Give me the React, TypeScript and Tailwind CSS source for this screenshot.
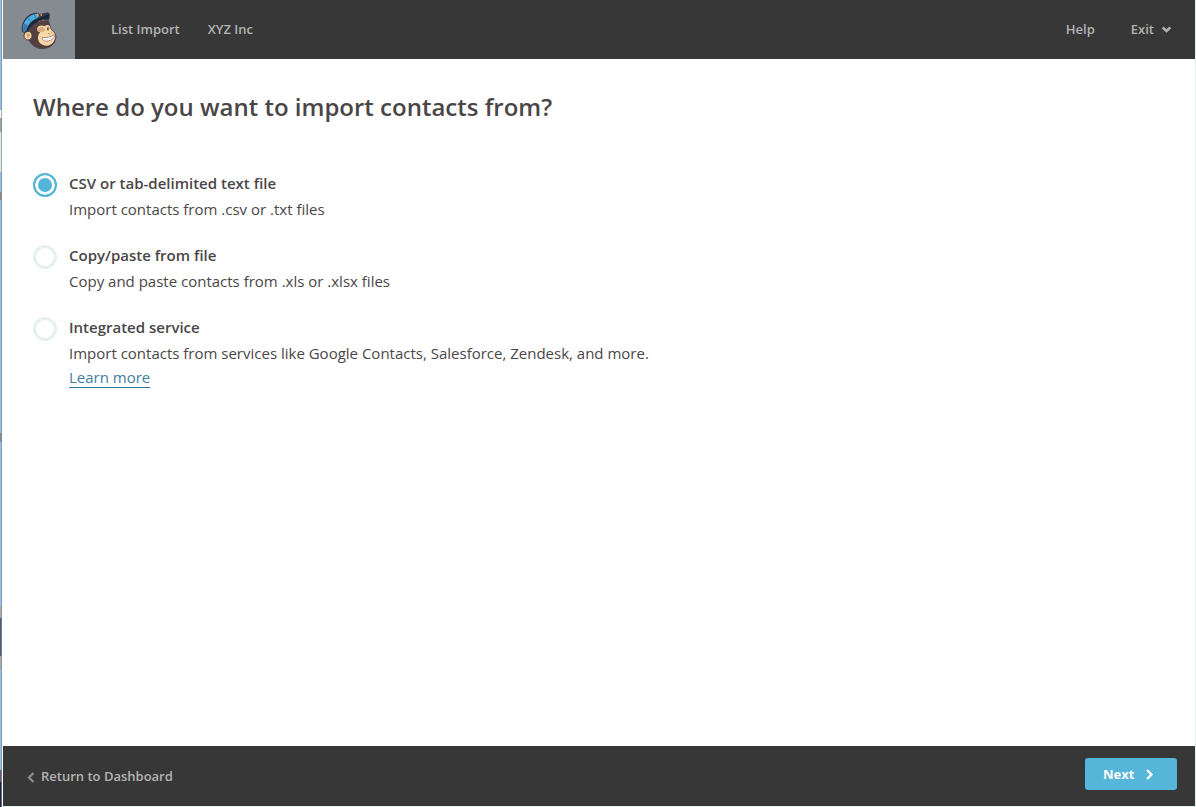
import React, { useState } from 'react';

type ImportSource = {
  id: string;
  title: string;
  description: string;
  link?: string;
};

const sources: ImportSource[] = [
  { id: 'csv', title: 'CSV or tab-delimited text file', description: 'Import contacts from .csv or .txt files' },
  { id: 'paste', title: 'Copy/paste from file', description: 'Copy and paste contacts from .xls or .xlsx files' },
  {
    id: 'service',
    title: 'Integrated service',
    description: 'Import contacts from services like Google Contacts, Salesforce, Zendesk, and more.',
    link: 'Learn more',
  },
];

const MonkeyLogo = () => (
  <svg className="h-[39px] w-[37px]" viewBox="60 34 111 117" aria-hidden="true">
    {/* head */}
    <path d="M84 92L104 70L145 62L152 84C154 92 166 98 168 110C168 132 150 147 128 147C106 147 92 134 86 119Z" fill="#53403f" stroke="#443b4d" strokeWidth="2" />
    {/* face */}
    <path d="M111 88C114 76 126 76 134 80C141 73 150 75 151 84C151 91 163 95 166 107C167 126 153 139 139 138C123 137 112 125 114 111C115 104 119 101 120 97C114 97 111 93 111 88Z" fill="#f7d7a3" />
    <path d="M114 88C118 80 128 81 133 84L136 92C130 98 118 98 114 94Z" fill="#d8aa7b" />
    <path d="M143 80C149 79 150 85 148 90L142 88Z" fill="#d8aa7b" />
    <path d="M143 84L144 92" stroke="#53403f" strokeWidth="4" />
    <path d="M144 101L149 103M154 99L157 101" stroke="#9c6b55" strokeWidth="2" />
    {/* ear */}
    <ellipse cx="84" cy="108" rx="12" ry="13" fill="#f7d7a3" stroke="#53403f" strokeWidth="3" />
    <path d="M79 106C83 101 89 103 89 109M85 106L83 114" fill="none" stroke="#b98262" strokeWidth="3" />
    {/* smile */}
    <path d="M126 113C137 116 152 112 164 105C165 116 151 127 133 124C129 122 127 118 126 113Z" fill="#fff" stroke="#8b6257" strokeWidth="2" />
    <path d="M130 119C143 120 155 117 162 111M140 115L141 123M151 112L153 119" fill="none" stroke="#b7b6b7" strokeWidth="1" />
    {/* cap */}
    <path d="M66 97C62 75 72 55 91 44C103 37 112 38 119 43L145 38L150 45L148 60C127 61 108 67 95 82L82 97L74 100Z" fill="#393955" />
    <path d="M69 94C66 76 75 58 92 48C101 43 110 41 117 45L112 56C94 62 84 75 79 91L72 97Z" fill="#4aaede" />
    <path d="M69 94C68 86 70 77 75 71L84 78C80 85 79 90 78 94Z" fill="#367eac" />
    <path d="M85 57L94 67M103 44L107 56" stroke="#327aa8" strokeWidth="3" />
    <path d="M80 94C85 75 98 61 119 55L147 43L146 57C122 57 105 66 93 80L83 93Z" fill="#172733" />
    <path d="M111 42L116 51M123 43L124 49" stroke="#eb9c58" strokeWidth="4" />
    <path d="M116 65L121 63M126 62L131 61" stroke="#d59451" strokeWidth="2" />
  </svg>
);

const App = () => {
  const [selected, setSelected] = useState('csv');

  return (
    <div className="flex min-h-screen bg-white font-['Open_Sans','Noto_Sans',sans-serif] text-[#4a4647]">
      <div className="mr-px w-[2px] shrink-0 border-r border-[#7d8b98]/70 bg-[linear-gradient(#8fc3ed_110px,#ffffff_110px_118px,#9aa4a9_118px_132px,#dceae8_132px_172px,#8fc3ed_172px_192px,#858b8f_192px_200px,#8fc3ed_200px_433px,#858b8f_433px_442px,#8fc3ed_442px_606px,#a8aaaa_606px_618px,#54597c_618px_656px,#a8aaaa_656px_670px,#8fc3ed_670px_770px,#665e70_770px_782px,#1c2838_782px)]" />
      <div className="flex min-w-0 flex-1 flex-col border-r border-b border-[#e4f0ee]">
        <header className="flex h-[59px] items-center bg-[#373737] text-[13px] font-semibold text-[#b3b3b3]">
          <a href="#" aria-label="Home" className="flex h-full w-[72px] items-center justify-center bg-[#848b91] pt-0.5 pr-0.5">
            <MonkeyLogo />
          </a>
          <nav className="flex flex-1 gap-7 pl-9">
            <a href="#">List Import</a>
            <a href="#">XYZ Inc</a>
          </nav>
          <nav className="flex items-center gap-9 pr-6">
            <a href="#">Help</a>
            <button type="button" className="flex items-center gap-2">
              Exit
              <svg className="h-[9px] w-[9px]" viewBox="0 0 9 9" aria-hidden="true">
                <path d="M0.700 2.500L4.500 6L8.300 2.500" fill="none" stroke="currentColor" strokeWidth="2.500" />
              </svg>
            </button>
          </nav>
        </header>

        <main className="flex-1 px-[30px] pt-8">
          <h1 className="text-2xl font-semibold">Where do you want to import contacts from?</h1>
          <form className="mt-12 flex flex-col gap-[22px]">
            {sources.map((source) => (
              <div key={source.id} className="flex gap-3">
                <input
                  type="radio"
                  id={source.id}
                  name="source"
                  checked={selected === source.id}
                  onChange={() => setSelected(source.id)}
                  className="mt-0.5 h-6 w-6 shrink-0 appearance-none rounded-full border-[3px] border-[#e6f0ee] bg-white checked:border-2 checked:border-[#52b5d9] checked:bg-[#52b5d9] checked:shadow-[inset_0_0_0_3px_white]"
                />
                <div className="text-[15px] leading-6">
                  <label htmlFor={source.id} className="mb-0.5 block font-semibold">{source.title}</label>
                  <p>{source.description}</p>
                  {source.link && (
                    <a href="#" className="inline-block border-b border-[#2c7bab] leading-5 text-[#4180a5]">{source.link}</a>
                  )}
                </div>
              </div>
            ))}
          </form>
        </main>

        <footer className="flex h-[60px] items-center justify-between bg-[#373737] pr-[18px] pl-6 text-[13px]">
          <a href="#" className="flex items-center gap-1.5 pt-0.5 font-semibold text-[#b3b3b3]">
            <svg className="h-[11px] w-2" viewBox="0 0 8 11" aria-hidden="true">
              <path d="M6.500 1L2 5.500L6.500 10" fill="none" stroke="#8c8c8c" strokeWidth="2.300" />
            </svg>
            Return to Dashboard
          </a>
          <button type="button" className="mb-1 flex h-8 w-[92px] items-center gap-3 rounded-[3px] bg-[#56b6d9] pt-px pl-[18px] font-bold text-white">
            Next
            <svg className="h-[11px] w-2" viewBox="0 0 8 11" aria-hidden="true">
              <path d="M1 1L5.500 5.500L1 10" fill="none" stroke="currentColor" strokeWidth="2.300" />
            </svg>
          </button>
        </footer>
      </div>
    </div>
  );
};

export default App;
